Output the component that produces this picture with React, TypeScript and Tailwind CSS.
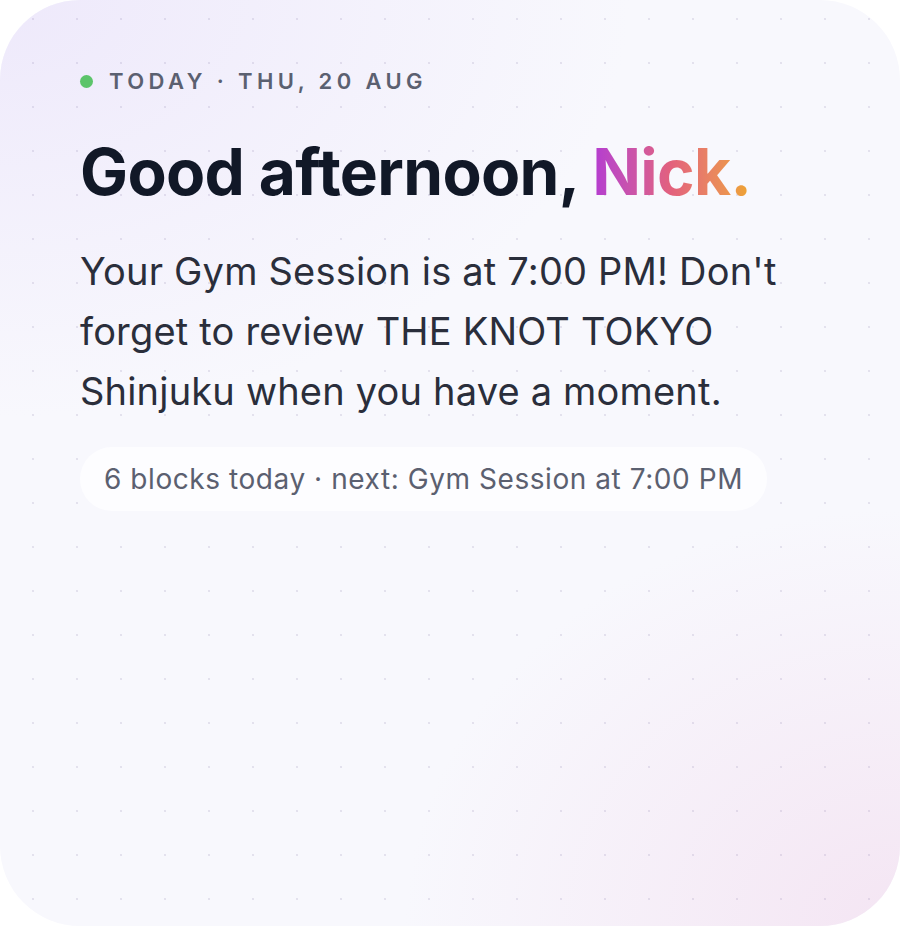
export default function App() {
  return (
    <div className="w-[900px] h-[926px] bg-white" style={{ fontFamily: 'Inter, "Noto Sans", sans-serif' }}>
      <div className="relative w-full h-full rounded-[80px] overflow-hidden bg-[#f8f8fd]">
        {/* soft colour washes */}
        <div className="absolute inset-0 bg-[radial-gradient(ellipse_70%_45%_at_0%_0%,#eee9fb_0%,rgba(248,248,253,0)_100%)]" />
        <div className="absolute inset-0 bg-[radial-gradient(ellipse_55%_45%_at_100%_100%,#f4e5f3_0%,rgba(248,248,253,0)_100%)]" />
        {/* dot grid */}
        <div className="absolute inset-0 bg-[radial-gradient(circle,rgba(120,110,160,0.16)_0.9px,transparent_1.4px)] bg-[length:44px_44px] bg-[position:11px_-3px]" />

        <div className="relative flex flex-col items-start pl-20 pr-16 pt-[67px]">
          <div className="flex items-center gap-4 h-[28px]">
            <span className="w-[13px] h-[13px] rounded-full bg-[#5cc46a]" />
            <span className="text-[22px] leading-[28px] font-semibold tracking-[0.2em] text-[#5b6070] uppercase">
              Today · Thu, 20 Aug
            </span>
          </div>

          <h1 className="mt-[42px] text-[64px] leading-[70px] font-bold tracking-[-0.01em] text-[#111827] whitespace-nowrap">
            Good afternoon,{' '}
            <span className="bg-gradient-to-r from-[#b43ad2] via-[#e3617c] to-[#eea42c] bg-clip-text text-transparent">
              Nick.
            </span>
          </h1>

          <p className="mt-[34px] max-w-[740px] text-[38px] leading-[60px] tracking-[0.005em] text-[#2a2e3b]">
            Your Gym Session is at 7:00 PM! Don't forget to review THE KNOT TOKYO Shinjuku when you have a moment.
          </p>

          <div className="mt-[26px] h-[64px] flex items-center px-6 rounded-full bg-[#fdfdff]">
            <span className="text-[28px] tracking-[0.02em] text-[#5b6070]">
              6 blocks today · next: Gym Session at 7:00 PM
            </span>
          </div>
        </div>
      </div>
    </div>
  );
}
